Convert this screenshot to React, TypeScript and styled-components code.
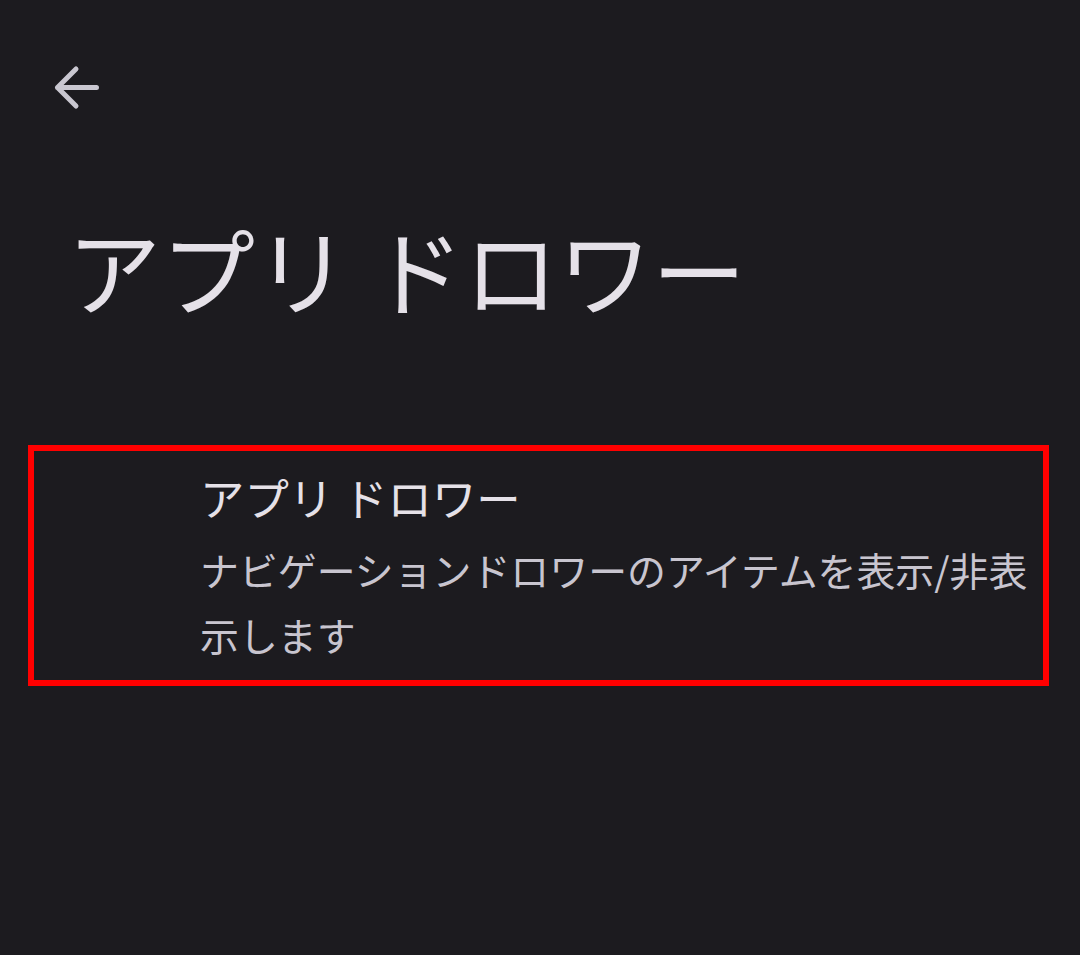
import React from "react";
import styled, { createGlobalStyle } from "styled-components";

const Global = createGlobalStyle`
  html, body {
    margin: 0;
    padding: 0;
    background: #1c1b1f;
  }
  body {
    font-family: "Noto Sans CJK JP", "Noto Sans", sans-serif;
  }
`;

const Page = styled.div`
  width: 1080px;
  min-height: 955px;
  background: #1c1b1f;
  display: flex;
  flex-direction: column;
  box-sizing: border-box;
`;

const TopBar = styled.div`
  display: flex;
  align-items: center;
  padding: 56px 0 0 44px;
`;

const BackButton = styled.button`
  width: 63px;
  height: 63px;
  padding: 0;
  border: none;
  background: transparent;
  display: flex;
  align-items: center;
  justify-content: center;
  color: #c9c7d0;
  cursor: pointer;
`;

const Title = styled.h1`
  margin: 102px 0 0 67px;
  font-size: 94px;
  line-height: 94px;
  font-weight: 400;
  color: #e5e1e8;
  letter-spacing: 0;
`;

const Item = styled.div`
  margin: 130px 31px 0 28px;
  border: 6px solid #ff0000;
  padding: 16px 0 13px 166px;
  display: flex;
  flex-direction: column;
  gap: 10px;
`;

const ItemTitle = styled.div`
  font-size: 44.4px;
  line-height: 60px;
  color: #e5e1e8;
`;

const ItemSummary = styled.div`
  font-size: 38.9px;
  line-height: 65px;
  color: #c8c5cf;
`;

export default function App() {
  return (
    <Page>
      <Global />
      <TopBar>
        <BackButton aria-label="戻る">
          <svg width="63" height="63" viewBox="0 0 63 63" fill="none">
            <path
              d="M52.5 31.5H13.5M32 13L13.5 31.5L32 50"
              stroke="currentColor"
              strokeWidth="5"
              strokeLinecap="round"
              strokeLinejoin="round"
            />
          </svg>
        </BackButton>
      </TopBar>
      <Title>アプリ ドロワー</Title>
      <Item>
        <ItemTitle>アプリ ドロワー</ItemTitle>
        <ItemSummary>ナビゲーションドロワーのアイテムを表示/非表示します</ItemSummary>
      </Item>
    </Page>
  );
}
